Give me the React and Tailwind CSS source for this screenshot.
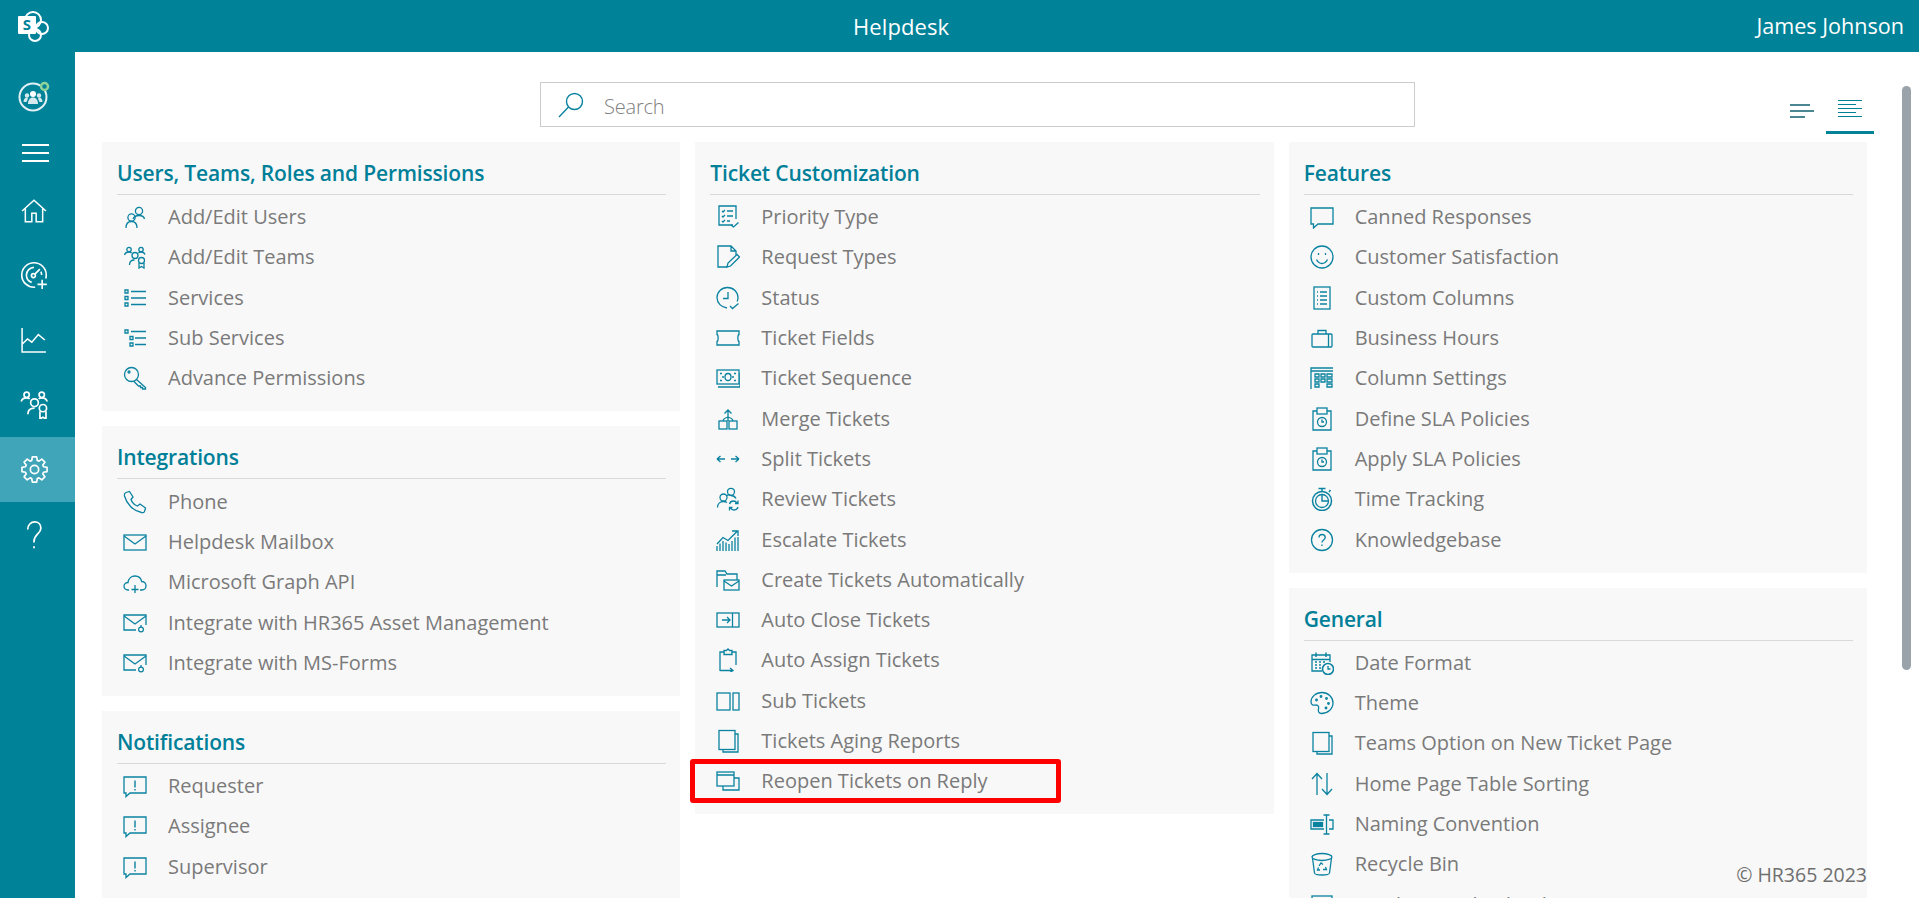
const I = ({ children, className = "" }) => (
  <svg viewBox="0 0 24 24" fill="none" stroke="currentColor" strokeWidth="1.3" className={"w-6 h-6 text-[#0a82a0] " + className}>
    {children}
  </svg>
);

const Gear = ({ x, y }) => (
  <g>
    <circle cx={x} cy={y} r="2.4" strokeWidth="1.2" />
    <path d={`M${x} ${y - 4.4}v2M${x} ${y + 2.4}v2M${x - 4.4} ${y}h2M${x + 2.4} ${y}h2M${x - 3.1} ${y - 3.1}l1.4 1.4M${x + 1.7} ${y + 1.7}l1.4 1.4M${x + 3.1} ${y - 3.1}l-1.4 1.4M${x - 1.7} ${y + 1.7}l-1.4 1.4`} />
  </g>
);

// cog outline with 8 teeth for the settings item
function cogPath() {
  const pts = [];
  for (let i = 0; i < 8; i++) {
    const a = (i * Math.PI) / 4 - Math.PI / 2;
    [[-0.3, 8.4], [-0.17, 11.3], [0.17, 11.3], [0.3, 8.4]].forEach(([d, r]) => {
      pts.push((12 + r * Math.cos(a + d)).toFixed(2) + " " + (12 + r * Math.sin(a + d)).toFixed(2));
    });
  }
  return "M" + pts.join("L") + "Z";
}

const icons = {
  users: <I><circle cx="16" cy="6" r="3.6" /><path d="M10 14c1-2.500 3-3.500 6-3.500s5 1 5.500 3.500" /><circle cx="8.500" cy="12.500" r="3.600" /><path d="M3 23c0-4 2-6.500 5.500-6.500S14 19 14 23" /></I>,
  teams: <I><circle cx="6" cy="4.500" r="2.200" /><circle cx="18" cy="4.500" r="2.200" /><circle cx="12" cy="10.500" r="3" /><path d="M1.500 10c.5-2 2.500-3 4.500-3 1 0 2 .3 2.500 1M22 9.500c-.5-1.500-2-2.500-4-2.500-1 0-2 .3-2.500 1M6.500 20c0-3 2-5 5-5" /><circle cx="18.500" cy="15.500" r="3" /><path d="M16 18v5l2.500-1.500L21 23v-5" /></I>,
  list: <I><path d="M2 4h3v3H2zM2 10.500h3v3H2zM2 17h3v3H2z" /><path d="M8 5.500h15M8 12h15M8 18.500h15" /></I>,
  sublist: <I><path d="M2 4h3v3H2zM7 10.500h3v3H7zM7 17h3v3H7z" /><path d="M8 5.500h15M12 12h11M12 18.500h11" /></I>,
  key: <I><circle cx="8.500" cy="8.500" r="7" /><circle cx="6" cy="6" r="1" /><path d="M13.500 13.500l9 8v1.500h-3v-1.500h-2V20h-2l-4.500-4.500" /></I>,
  phone: <I><path d="M3 2.500L6.500 1.500 10 7 8 9.500c1 3 3.500 5.500 6.500 6.500l2.500-2 5.500 4-1 3.500c-.5 1-1.500 1.500-3 1C10 21 3.500 13.500 1.500 6 1.200 4.500 2 3 3 2.500z" /></I>,
  mail: <I><rect x="1" y="5" width="22" height="15" /><path d="M1 6l11 8 11-8" /></I>,
  cloud: <I><path d="M6 20H5c-2.500 0-4-1.700-4-3.700C1 14 3 12.500 5 12.500 5.500 8.500 8.500 6 12 6c3.500 0 6 2.300 6.700 5.500 2.500 0 4.300 2 4.300 4.300 0 2.400-1.800 4.200-4 4.200h-2" /><path d="M12 15v8M8.500 19.500h7" /></I>,
  mailGear: <I><path d="M13 19H1V4h22v10" /><path d="M1 5l11 8 11-8" /><Gear x="18" y="18.500" /></I>,
  alert: <I><path d="M1 3h22v16H7l-4 3.500V19H1z" /><path d="M12 6.500v7M12 15v1.500" strokeWidth="1.400" /></I>,
  priority: <I><path d="M17 20H3V1h17v13" /><path d="M6 6l1 1 2-2M6 11l1 1 2-2M6 16l1 1 2-2M11 6h6M11 11h6M11 16h3M15 20l2.500 2 5-4.500" /></I>,
  request: <I><path d="M11 22H2V1h13l5 5v4M15 1v5h5" /><path d="M11 22l1-4 9-8.500 2.500 2.500-9 9z" /></I>,
  clockCheck: <I><path d="M11 22C5.500 21.500 1 17 1 11.500 1 6 5.500 1.500 11.500 1.500S22 6 22 11.500c0 1.500-.3 3-1 4" /><path d="M12 6v6.500H7M14 20l2.500 2.500 6-5" /></I>,
  ticket: <I><path d="M1 5h22v3.500c-1.500 0-1.500 7 0 7V19H1v-3.500c1.500 0 1.500-7 0-7z" /></I>,
  money: <I><rect x="1" y="4" width="22" height="14" /><path d="M2 21h22V7" /><ellipse cx="12" cy="11" rx="3" ry="3.500" /><path d="M4 7.500h2M18 14.500h2M4 14.500h2M18 7.500h2M6 11h2M16 11h2" /></I>,
  merge: <I><rect x="3" y="14" width="8" height="8" /><rect x="13" y="14" width="8" height="8" /><path d="M12 14V3M8.500 6.500L12 3l3.500 3.500M7 14c0-2 2-3 5-4 3 1 5 2 5 4" /></I>,
  split: <I><path d="M1 12h8M1 12l3.500-3M1 12l3.500 3M23 12h-8M23 12l-3.500-3M23 12l-3.500 3" /></I>,
  review: <I><circle cx="15" cy="4.800" r="3.500" /><circle cx="7.500" cy="10.500" r="3.500" /><path d="M1.500 20.500c0-3.500 2.500-6 6-6 1.500 0 2.500.4 3.500 1M10.500 9c.5-1 2.500-1.500 4.500-.5 2 0 4 1 5 3" /><path d="M13.500 17c.5-2 2-3 4-3 1.500 0 2.800 .8 3.500 2M22 13.500V16.500h-3M22 20c-.5 2-2 3-4 3-1.500 0-2.800-.8-3.500-2M13.500 23.500V20.500h3" /></I>,
  escalate: <I><path d="M1 23v-5M4 23v-7.500M7 23V13M10 23v-8.500M13 23V16M16 23V13M19 23V9.500M22 23V9" /><path d="M1 16l6-6.500 5 3 9-9M16 3h6v5" /></I>,
  folderMail: <I><path d="M1 19V3h8l2 3h10v6M1 7h9" /><rect x="8" y="12" width="15" height="10" /><path d="M8 13l7.500 5L23 13" /></I>,
  autoClose: <I><rect x="1" y="5" width="22" height="14" /><path d="M16.500 5v14M6 12h8M11 9l3 3-3 3" /></I>,
  autoAssign: <I><path d="M4 23V4h4V2.500h2.500L12 1l1.500 1.500H16V4h4v13" /><path d="M8 4v2.500h8V4M4 22.500h13M14 20l3 2.500-3 2" /></I>,
  sub: <I><rect x="1" y="4" width="13" height="17" /><rect x="17" y="4" width="6" height="17" /></I>,
  copy: <I><rect x="3" y="1.500" width="16" height="19" /><path d="M19 5h3v18H7v-2.500" /></I>,
  reopen: <I><rect x="1" y="3" width="17" height="14" /><path d="M1 6h17M18 9h5v12H7v-4" /></I>,
  canned: <I><path d="M1 3h22v16H8l-4.500 4V19H1z" /></I>,
  smile: <I><circle cx="12" cy="12" r="11" /><path d="M8.500 8v2M15.500 8v2" /><path d="M6.500 14.500c1.500 3 3.500 4 5.500 4s4-1 5.500-4" /></I>,
  columns: <I><rect x="4" y="1" width="16" height="22" /><path d="M7 6h1M7 10h1M7 14h1M7 18h1M10 6h7M10 10h7M10 14h7M10 18h7" /></I>,
  briefcase: <I><rect x="2" y="8" width="20" height="13" rx="1" /><path d="M8 8V4.500h8V8M18.500 8v13" /></I>,
  keypad: <I><path d="M1 23V2h22M1 5h22" /><path d="M5 8h4v3H5zM11 8h4v3h-4zM17 8h5v3h-5zM5 13h4v3H5zM11 13h4v3h-4zM17 13h5v3h-5zM5 18h4v3H5zM17 18h5v3h-5z" /></I>,
  sla: <I><path d="M7 4H3v19h18V4h-4" /><rect x="7" y="1" width="10" height="6" /><circle cx="12" cy="15" r="4.500" /><path d="M12 12.500V15h2" /></I>,
  stopwatch: <I><circle cx="12" cy="14" r="9.500" strokeWidth="1.500" /><circle cx="12" cy="14" r="6.500" /><path d="M12 8v6h6M8.500 1.500h7M12 1.500v3M19 5l1.500-2" strokeWidth="1.400" /></I>,
  help: <I><circle cx="12" cy="12" r="10.500" /><path d="M9 9.500C9 7.500 10.500 6.500 12 6.500c2 0 3.200 1.300 3.200 3 0 2.500-3.200 2.500-3.200 5M12 16.500v1.500" /></I>,
  calendar: <I><path d="M12 20H2V4h18v7" /><path d="M2 8.500h18M6 1.500V6M16 1.500V6M5 11h2M9 11h2M13 11h2M5 14h2M9 14h2M5 17h2M9 17h2" strokeWidth="1.400" /><circle cx="18" cy="18" r="5.500" strokeWidth="1.500" /><path d="M18 15v3h2.500" /></I>,
  palette: <I><path d="M12 1.500C5.500 1.500 1 6 1 11c0 4 3.500 3 5 3 2.500 0 3 2 2.500 4-.5 2 0 4.500 3 4.500 6 0 11.500-4.500 11.500-10.500S18 1.500 12 1.500z" /><circle cx="6.500" cy="9" r=".8" /><circle cx="11" cy="5.500" r=".8" /><circle cx="16.500" cy="7.500" r=".8" /><circle cx="18.500" cy="12.500" r=".8" /><circle cx="16" cy="17" r=".8" /></I>,
  sort: <I><path d="M7 23V1.500M2 7l5-5.500L12 7M17 1v21.500M12 17l5 5.500 5-5.500" /></I>,
  naming: <I><path d="M14 8H1v9h13M19 8h4v9h-4" /><rect x="3.500" y="10.500" width="9" height="4" fill="currentColor" /><path d="M16.500 3v19M13.500 3h6M13.500 22h6" /></I>,
  bin: <I><ellipse cx="12" cy="5" rx="10" ry="3.500" /><path d="M2.500 6l2 15c.2 1.300 3 2 7.500 2s7.300-.7 7.500-2l2-15" /><path d="M9 14l2-3 2 1.500M15.500 15l1 2.500H13M10 18H7.500l1-2.500" /></I>,
  display: <I><rect x="2" y="3" width="20" height="14" /></I>,
};

const sections = [
  [
    { title: "Users, Teams, Roles and Permissions", rows: [["users", "Add/Edit Users"], ["teams", "Add/Edit Teams"], ["list", "Services"], ["sublist", "Sub Services"], ["key", "Advance Permissions"]] },
    { title: "Integrations", rows: [["phone", "Phone"], ["mail", "Helpdesk Mailbox"], ["cloud", "Microsoft Graph API"], ["mailGear", "Integrate with HR365 Asset Management"], ["mailGear", "Integrate with MS-Forms"]] },
    { title: "Notifications", rows: [["alert", "Requester"], ["alert", "Assignee"], ["alert", "Supervisor"]] },
  ],
  [
    { title: "Ticket Customization", rows: [["priority", "Priority Type"], ["request", "Request Types"], ["clockCheck", "Status"], ["ticket", "Ticket Fields"], ["money", "Ticket Sequence"], ["merge", "Merge Tickets"], ["split", "Split Tickets"], ["review", "Review Tickets"], ["escalate", "Escalate Tickets"], ["folderMail", "Create Tickets Automatically"], ["autoClose", "Auto Close Tickets"], ["autoAssign", "Auto Assign Tickets"], ["sub", "Sub Tickets"], ["copy", "Tickets Aging Reports"], ["reopen", "Reopen Tickets on Reply"]] },
  ],
  [
    { title: "Features", rows: [["canned", "Canned Responses"], ["smile", "Customer Satisfaction"], ["columns", "Custom Columns"], ["briefcase", "Business Hours"], ["keypad", "Column Settings"], ["sla", "Define SLA Policies"], ["sla", "Apply SLA Policies"], ["stopwatch", "Time Tracking"], ["help", "Knowledgebase"]] },
    { title: "General", rows: [["calendar", "Date Format"], ["palette", "Theme"], ["copy", "Teams Option on New Ticket Page"], ["sort", "Home Page Table Sorting"], ["naming", "Naming Convention"], ["bin", "Recycle Bin"], ["display", "Display Resolved Tickets Home Page"]] },
  ],
];

function Panel({ title, rows }) {
  return (
    <div className="bg-[#f8f8f8] pt-[17px] pb-[13px] pl-[15px] pr-[14px]">
      <h2 className="h-[36px] border-b border-[#d9d9d9] text-[21px] leading-[28px] font-semibold text-[#007f98] tracking-[-0.15px]">{title}</h2>
      <div className="mt-[2px]">
        {rows.map(([icon, label]) => (
          <div key={label} className="relative flex items-center h-[40.3px]">
            <div className="w-[51px] shrink-0 pl-[6px]">{icons[icon]}</div>
            <span className="text-[20px] text-[#7a7a7a] whitespace-nowrap">{label}</span>
            {label === "Reopen Tickets on Reply" && (
              <div className="absolute left-[-20px] top-[-2px] w-[371px] h-[44px] border-[5px] border-[#ff0000] rounded-[3px]" />
            )}
          </div>
        ))}
      </div>
    </div>
  );
}

function SideIcon({ className, children }) {
  return <div className={"flex items-center justify-center " + className}>{children}</div>;
}

const W = ({ children, size = "w-[30px] h-[30px]", sw = 1.2 }) => (
  <svg viewBox="0 0 24 24" fill="none" stroke="white" strokeWidth={sw} className={size}>{children}</svg>
);

export default function App() {
  return (
    <div className="relative h-[898px] overflow-hidden bg-white font-['Open_Sans',sans-serif]">
      <header className="flex items-center h-[52px] bg-[#008299] text-white">
        <div className="w-[75px] shrink-0 pl-[16px]">
          <svg viewBox="0 0 34 34" className="w-[34px] h-[34px]" fill="none" stroke="white" strokeWidth="2">
            <circle cx="17" cy="11" r="8" />
            <circle cx="26" cy="19" r="6" />
            <circle cx="19" cy="26" r="6" />
            <rect x="2" y="7" width="18" height="18" rx="1" fill="white" stroke="none" />
            <text x="11" y="21" textAnchor="middle" fontSize="15" fontWeight="700" fill="#008299" stroke="none" fontFamily="Open Sans, sans-serif">S</text>
          </svg>
        </div>
        <span className="ml-[778px] text-[22px] tracking-[0.1px]">Helpdesk</span>
        <span className="ml-auto mr-[15px] text-[21.6px]">James Johnson</span>
      </header>

      <div className="flex h-[846px]">
        <aside className="w-[75px] shrink-0 bg-[#008299] pr-[7px] pt-[15px]">
          <SideIcon className="h-[60px]">
            <svg viewBox="0 0 32 32" className="w-[32px] h-[32px]" fill="none">
              <circle cx="15" cy="16" r="13.500" stroke="#e3f1f4" strokeWidth="2" />
              <circle cx="15" cy="13" r="3" fill="white" />
              <circle cx="9" cy="14.500" r="2.200" fill="#d6eaee" />
              <circle cx="21" cy="14.500" r="2.200" fill="#d6eaee" />
              <path d="M10 23c0-4 2-6.500 5-6.500s5 2.500 5 6.500zM5.500 21c0-3 1.500-4.500 3.500-4.500l1 1-1.500 3.500zM24.500 21c0-3-1.500-4.500-3.500-4.500l-1 1 1.500 3.500z" fill="#d6eaee" />
              <circle cx="26.500" cy="5.500" r="3.500" stroke="#8fd39a" strokeWidth="2.500" fill="#008299" />
            </svg>
          </SideIcon>
          <SideIcon className="h-[52px]">
            <div className="flex flex-col gap-[6px] w-[27px] ml-[3px]">
              <div className="h-[2px] bg-white" />
              <div className="h-[2px] bg-white" />
              <div className="h-[2px] bg-white" />
            </div>
          </SideIcon>
          <SideIcon className="h-[63px]">
            <W sw={1.400} size="w-[26px] h-[26px]"><path d="M1 12L12 2l11 10M4 10v12h6v-8h4v8h6V10" /></W>
          </SideIcon>
          <SideIcon className="h-[65px]">
            <W sw={1.400} size="w-[28px] h-[28px]"><path d="M13 22.500C6.500 23 1.500 18 1.500 12S6.500 1.500 12 1.500 22.500 6 22.500 12c0 1-.1 2-.4 3" /><path d="M12 5.500c-3.500 0-6.500 3-6.500 6.500 0 3 2 5.500 4.500 6.300M18.500 12c0-1-.2-2-.6-2.800" /><circle cx="11.500" cy="12.500" r="1.700" /><path d="M13 11l4-4M19 16v8M15 20h8" /></W>
          </SideIcon>
          <SideIcon className="h-[65px]">
            <W sw={1.400} size="w-[26px] h-[26px]"><path d="M1 1v22h22M1 16l5-5 4 3 6-7 6 5" /></W>
          </SideIcon>
          <SideIcon className="h-[65px]">
            <W sw={1.400} size="w-[29px] h-[29px]"><circle cx="5.500" cy="4" r="2.200" /><circle cx="18" cy="4" r="2.200" /><circle cx="12" cy="10.500" r="3.200" /><path d="M1 9.500C1.500 7.500 3.500 6.500 5.500 6.500c1 0 2 .3 2.500 1M22.500 9.500C22 7.500 20 6.500 18 6.500c-1 0-2 .3-2.500 1M6.500 20c0-3 2-5 5.500-5" /><circle cx="19" cy="15" r="3" /><path d="M16.500 17.500V24l2.500-1.500 2.500 1.500v-6.500" /></W>
          </SideIcon>
          <div className="-mr-[7px] h-[65px] bg-[#40a5b8] pr-[7px] flex items-center justify-center">
            <W sw={1.500} size="w-[27px] h-[27px]"><circle cx="12" cy="12" r="3.700" /><path strokeLinejoin="round" d={cogPath()} /></W>
          </div>
          <SideIcon className="h-[65px]">
            <W sw={1.400} size="w-[30px] h-[30px]"><path d="M7 7.500C7 4 9.500 1.500 12.500 1.500s5 2.200 5 5c0 4.500-5.500 5-5.500 10.500v1M12 21v1.500" /></W>
          </SideIcon>
        </aside>

        <main className="flex-1 min-w-0 pl-[27px] pr-[52px]">
          <div className="flex h-[90px] pt-[30px]">
            <div className="flex items-center ml-[438px] w-[875px] h-[45px] shrink-0 border border-[#cccccc] pl-[17px]">
              <svg viewBox="0 0 26 26" className="w-[26px] h-[26px]" fill="none" stroke="#0a82a0" strokeWidth="1.400">
                <circle cx="16.500" cy="9.500" r="8" />
                <path d="M10.500 15L1 25" />
              </svg>
              <span className="ml-[20px] pt-[4px] text-[20px] font-light text-[#808080] tracking-[-0.2px]">Search</span>
            </div>
            <div className="flex shrink-0 ml-[375px] h-[49px]">
              <div className="flex flex-col justify-center gap-[4px] w-[36px] pt-[8px]">
                <div className="h-[2px] w-[20px] bg-[#4b8793]" />
                <div className="h-[2px] w-[24px] bg-[#4b8793]" />
                <div className="h-[2px] w-[15px] bg-[#4b8793]" />
              </div>
              <div className="flex flex-col items-start gap-[3px] w-[48px] pl-[12px] pt-[18px] h-[52px] border-b-[3px] border-[#008299]">
                <div className="h-[1px] w-[24px] bg-[#008299]" />
                <div className="h-[1px] w-[18px] bg-[#008299]" />
                <div className="h-[1px] w-[24px] bg-[#008299]" />
                <div className="h-[1px] w-[18px] bg-[#008299]" />
                <div className="h-[1px] w-[24px] bg-[#008299]" />
              </div>
            </div>
          </div>

          <div className="grid grid-cols-3 gap-[15px] items-start">
            {sections.map((col, i) => (
              <div key={i} className="flex flex-col gap-[15px]">
                {col.map((s) => (
                  <Panel key={s.title} title={s.title} rows={s.rows} />
                ))}
              </div>
            ))}
          </div>
        </main>
      </div>

      <div className="absolute right-[52px] top-[860px] text-[19.5px] text-[#6f6f6f]">© HR365 2023</div>
      <div className="absolute left-[1902px] top-[86px] w-[9px] h-[584px] rounded-full bg-[#9aa3aa]" />
    </div>
  );
}
